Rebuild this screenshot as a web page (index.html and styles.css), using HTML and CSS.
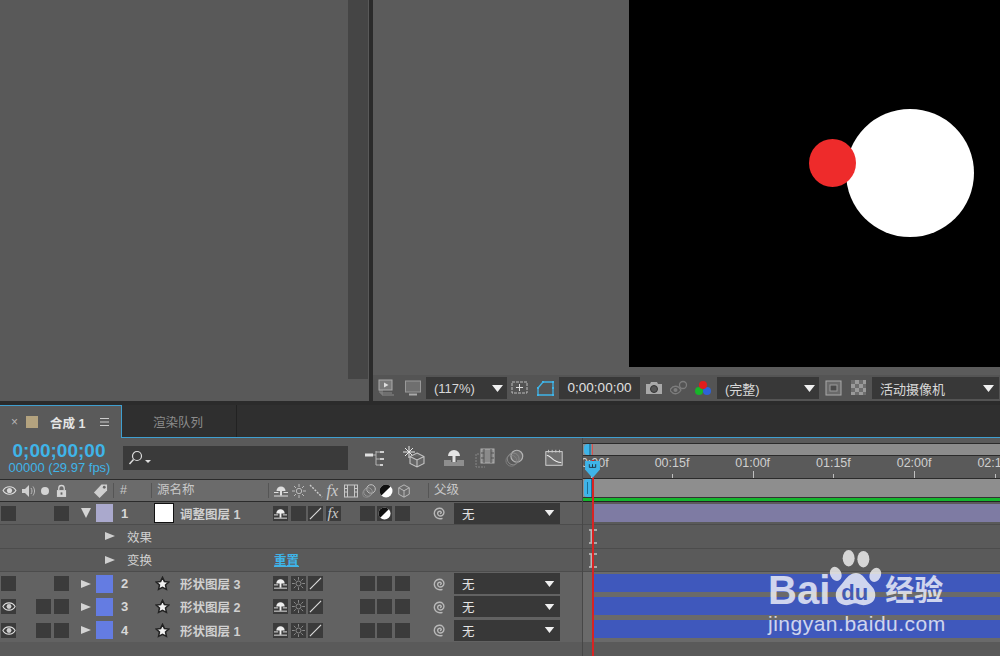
FILE: index.html
```html
<!DOCTYPE html>
<html lang="zh">
<head>
<meta charset="utf-8">
<title>After Effects</title>
<link rel="stylesheet" href="styles.css">
</head>
<body>
<svg class="defs" width="0" height="0" aria-hidden="true">
  <symbol id="shy" viewBox="0 0 14 14"><path d="M2.500 7a4.500 4.500 0 0 1 9 0z" fill="currentColor"/><path d="M6 6h2v5.500H6z" fill="currentColor"/><path d="M0 8.500h4.500M9.500 8.500H14M0 12h14" stroke="currentColor" stroke-width="1" fill="none"/></symbol>
  <symbol id="sun" viewBox="0 0 14 14"><circle cx="7" cy="7" r="2.700" fill="none" stroke="currentColor"/><path d="M7 0v3M7 11v3M0 7h3M11 7h3M2 2l2 2M10 10l2 2M12 2l-2 2M4 10l-2 2" stroke="currentColor"/></symbol>
  <symbol id="spiral" viewBox="0 0 14 14"><path d="M7 7.500c1.200.3 1.800-1.300.7-2-1.600-.8-3.300.5-3 2.300.3 2 2.900 2.800 4.700 1.600 2-1.400 2-4.400.2-6C8 1.600 4.500 1.800 2.500 4 .7 6.200 1 9.700 3.300 11.500 5 12.800 7.500 13 9.500 12.300" fill="none" stroke="currentColor" stroke-width="1.400"/></symbol>
  <symbol id="star" viewBox="0 0 16 16"><path d="M8 1.500l2 4.300 4.700.6-3.500 3.200 1 4.700L8 12l-4.200 2.300 1-4.700-3.500-3.200 4.700-.6z" fill="#f2f2f2" stroke="#222" stroke-width="1.600"/></symbol>
  <symbol id="half" viewBox="0 0 14 14"><circle cx="7" cy="7" r="6.500" fill="#fff"/><path d="M2.400 11.600A6.500 6.500 0 0 1 11.600 2.400z" fill="#111"/></symbol>
  <symbol id="cube" viewBox="0 0 16 16"><path d="M8 1l6 3.300v7.400L8 15l-6-3.300V4.300zM2 4.300l6 3.400 6-3.400M8 7.700V15" fill="none" stroke="currentColor" stroke-width="1.100"/></symbol>
  <symbol id="caret" viewBox="0 0 11 7"><path d="M0 0h11L5.500 7z" fill="currentColor"/></symbol>
  <symbol id="tri-r" viewBox="0 0 10 10"><path d="M0 1l10 4-10 4z" fill="currentColor"/></symbol>
  <symbol id="tri-d" viewBox="0 0 10 10"><path d="M0 0h10L5 10z" fill="currentColor"/></symbol>
  <symbol id="beam" viewBox="0 0 8 15"><path d="M0 1h8M0 14h8" stroke="#c4c4c4" stroke-width="1.500"/><path d="M1.500 1h3.500v13H1.500z" fill="#b8b8b8"/></symbol>
</svg>

<div class="app">
  <div class="top">
    <section class="left-panel">
      <div class="left-scroll"></div>
    </section>
    <section class="viewer">
      <div class="viewer-main">
        <div class="canvas">
          <div class="ball ball-white"></div>
          <div class="ball ball-red"></div>
        </div>
      </div>
      <div class="viewer-bar">
        <svg class="vb-icon gap8" viewBox="0 0 18 18"><path d="M4 5v11h12M2 3v11h12" fill="none" stroke="#8a8a8a"/><rect x="1" y="1" width="13" height="10" fill="#7a7a7a" stroke="#aaa"/><path d="M6 3.500l4.500 2.500L6 8.500z" fill="#ddd"/></svg>
        <svg class="vb-icon gap4" viewBox="0 0 18 18"><rect x="1.500" y="2" width="15" height="11" fill="#6f6f6f" stroke="#999"/><path d="M5 15.500h8" stroke="#aaa" stroke-width="2"/></svg>
        <div class="drop drop-zoom"><span>(117%)</span><svg class="caret"><use href="#caret"/></svg></div>
        <svg class="vb-icon gap8" viewBox="0 0 18 18"><path d="M1 3h15v11H1z" fill="none" stroke="#bbb" stroke-dasharray="3 1"/><path d="M8.500 5v7M5 8.500h7" stroke="#ddd"/></svg>
        <svg class="vb-icon gap4" viewBox="0 0 18 18"><path d="M6 3h10v13H1V9z" fill="none" stroke="#3fb4e8" stroke-width="1.300"/><path d="M5 2h2v2H5zM15 2h2v2h-2zM15 8h2v2h-2zM15 15h2v2h-2zM0 15h2v2H0zM0 8h2v2H0z" fill="#3fb4e8"/></svg>
        <div class="tc-box">0;00;00;00</div>
        <svg class="vb-icon gap7" viewBox="0 0 18 18"><path d="M1 5h4l1-2h6l1 2h4v10H1z" fill="#a8a8a8"/><circle cx="9" cy="10" r="3.500" fill="#555" stroke="#333"/></svg>
        <svg class="vb-icon gap6" viewBox="0 0 18 18"><path d="M0 11c3-5 8-5 11 0-3 5-8 5-11 0z" fill="none" stroke="#7d7d7d" stroke-width="1.300"/><circle cx="5.500" cy="11" r="2" fill="#7d7d7d"/><circle cx="13" cy="6" r="3.500" fill="none" stroke="#7d7d7d" stroke-width="1.300"/></svg>
        <svg class="vb-icon gap5" viewBox="0 0 18 18"><circle cx="5" cy="12" r="4" fill="#17b52a"/><circle cx="13" cy="12" r="4" fill="#2e62d8"/><circle cx="9" cy="6" r="4" fill="#e01d1d"/></svg>
        <div class="drop drop-res"><span>(完整)</span><svg class="caret"><use href="#caret"/></svg></div>
        <svg class="vb-icon gap7" viewBox="0 0 18 18"><rect x="1" y="2" width="15" height="14" fill="#6a6a6a" stroke="#aaa"/><rect x="5" y="6" width="7" height="6" fill="#4a4a4a" stroke="#999"/></svg>
        <svg class="vb-icon gap4" viewBox="0 0 18 18"><rect x="1" y="1" width="15" height="15" fill="#9a9a9a"/><path d="M1 1h4v4H1zM9 1h4v4H9zM5 5h4v4H5zM13 5h3v4h-3zM1 9h4v4H1zM9 9h4v4H9zM5 13h4v3H5zM13 13h3v3h-3z" fill="#6e6e6e"/></svg>
        <div class="drop drop-cam"><span>活动摄像机</span><svg class="caret"><use href="#caret"/></svg></div>
      </div>
    </section>
  </div>

  <div class="tabs">
    <div class="tab tab-active">
      <span class="tab-x">×</span>
      <span class="tab-chip"></span>
      <span class="tab-name">合成 1</span>
      <svg class="tab-menu" viewBox="0 0 9 8"><path d="M0 .5h9M0 4h9M0 7.500h9" stroke="#ccc"/></svg>
    </div>
    <div class="tab tab-idle">渲染队列</div>
    <div class="tab-rest"></div>
  </div>

  <div class="timeline">
    <div class="tl-left">
      <div class="controls">
        <div class="timecode">
          <div class="tc-main">0;00;00;00</div>
          <div class="tc-sub">00000 (29.97 fps)</div>
        </div>
        <div class="search">
          <svg class="search-icon" viewBox="0 0 24 16"><circle cx="9" cy="6" r="4.500" fill="none" stroke="#ddd" stroke-width="1.200"/><path d="M5.500 9.500L1.500 14" stroke="#ddd" stroke-width="1.500"/><path d="M17 10h6l-3 3z" fill="#ddd"/></svg>
        </div>
        <div class="tools">
          <svg class="tool t1" viewBox="0 0 22 20"><path d="M1 5h8" stroke="#e0e0e0" stroke-width="3"/><path d="M9 5h3M12 1v14M12 2h6M12 9h6M12 15h6" fill="none" stroke="#b4b4b4"/><path d="M16 1h4v2h-4zM16 8h4v2h-4zM16 14h3v2h-3z" fill="#cfcfcf"/></svg>
          <svg class="tool t2" viewBox="0 0 22 22"><path d="M6 0v12M0 6h12M2 2l8 8M10 2l-8 8" stroke="#e6e6e6"/><path d="M14 7l7 3.500v7L14 21l-7-3.500v-7zM7 10.500l7 3.500 7-3.500M14 14v7" fill="#666" stroke="#c4c4c4" stroke-width="1.100"/></svg>
          <svg class="tool t3" viewBox="0 0 22 20"><path d="M5 8a6 6 0 0 1 12 0z" fill="#e4e4e4"/><path d="M9.500 7h3v7h-3z" fill="#e4e4e4"/><path d="M1 12h7v2h6v-2h7v6H1z" fill="#8e8e8e"/></svg>
          <svg class="tool t4" viewBox="0 0 22 20"><rect x="7" y="1" width="13" height="14" fill="#8a8a8a" stroke="#b0b0b0"/><path d="M10 1v14M17 1v14M7 5h3M7 10h3M17 5h3M17 10h3" stroke="#555"/><path d="M2 6v13h9M5 6H2" fill="none" stroke="#858585" stroke-dasharray="2 1"/></svg>
          <svg class="tool t5" viewBox="0 0 22 20"><circle cx="13" cy="8" r="6.500" fill="#6e6e6e" stroke="#b4b4b4" stroke-width="1.300"/><circle cx="9" cy="11" r="6.500" fill="none" stroke="#8c8c8c"/><circle cx="7" cy="13" r="6" fill="none" stroke="#808080"/></svg>
          <svg class="tool t6" viewBox="0 0 22 20"><rect x="2" y="3" width="18" height="15" fill="#707070" stroke="#d8d8d8"/><path d="M3 7c5 0 6 8 16 8" fill="none" stroke="#eee" stroke-width="1.200"/><path d="M5 1v3M9 1v3M13 1v3M17 1v3" stroke="#ccc"/></svg>
        </div>
      </div>

      <div class="head">
        <div class="h-av">
          <svg class="h-eye" viewBox="0 0 16 12"><path d="M1 6c3-5.500 11-5.500 14 0-3 5.500-11 5.500-14 0z" fill="none" stroke="#e0e0e0" stroke-width="1.200"/><circle cx="8" cy="6" r="2.800" fill="#d8d8d8"/></svg>
          <svg class="h-spk" viewBox="0 0 14 14"><path d="M1 5h3l4-4v12L4 9H1z" fill="#d0d0d0"/><path d="M10 4c1.300 2 1.300 4 0 6M12 2.500c2 3 2 6 0 9" fill="none" stroke="#bbb"/></svg>
          <span class="h-dot"></span>
          <svg class="h-lock" viewBox="0 0 12 14"><path d="M3 6V4a3 3 0 0 1 6 0v2" fill="none" stroke="#d4d4d4" stroke-width="1.400"/><rect x="1" y="6" width="10" height="7.500" fill="#d4d4d4"/><rect x="5" y="8.500" width="2" height="2.500" fill="#666"/></svg>
        </div>
        <div class="h-label">
          <svg viewBox="0 0 16 16"><path d="M1 10L9 1.500h6V8l-8 8z" fill="#cfcfcf"/><circle cx="12" cy="4.500" r="1.500" fill="#666"/></svg>
        </div>
        <div class="h-num">#</div>
        <div class="h-name">源名称</div>
        <div class="h-sw">
          <svg class="hi"><use href="#shy"/></svg>
          <svg class="hi hi-sun"><use href="#sun"/></svg>
          <svg class="hi" viewBox="0 0 14 14"><path d="M1 1l12 12" stroke="#ccc" stroke-width="1.400" stroke-dasharray="2 1.300"/></svg>
          <span class="fx">fx</span>
          <svg class="hi" viewBox="0 0 14 14"><rect x=".5" y="1" width="13" height="12" fill="none" stroke="#c8c8c8"/><path d="M3.500 1v12M10.500 1v12M.5 4.500h3M.5 8h3M10.500 4.500h3M10.500 8h3" stroke="#c8c8c8"/></svg>
          <svg class="hi" viewBox="0 0 14 14"><circle cx="9" cy="5" r="4.300" fill="none" stroke="#c0c0c0"/><circle cx="6" cy="8" r="4.300" fill="none" stroke="#999"/><circle cx="4.500" cy="9.500" r="4" fill="none" stroke="#888"/></svg>
          <svg class="hi"><use href="#half"/></svg>
          <svg class="hi hi-cube"><use href="#cube"/></svg>
        </div>
        <div class="h-parent">父级</div>
      </div>

      <div class="row row-first">
        <div class="sw-av"><i class="box"></i><i class="gap"></i><i class="gap"></i><i class="box"></i></div>
        <svg class="tri"><use href="#tri-d"/></svg>
        <span class="chip chip-lilac"></span>
        <span class="num">1</span>
        <span class="solid"></span>
        <span class="name">调整图层 1</span>
        <div class="sw">
          <i class="box"><svg class="ib"><use href="#shy"/></svg></i><i class="box"></i>
          <i class="box"><svg class="ib" viewBox="0 0 14 14"><path d="M1 13L13 1" stroke="#ddd" stroke-width="1.200"/></svg></i>
          <i class="box fx-box">fx</i>
        </div>
        <div class="sw sw2"><i class="box"></i><i class="box"><svg class="ib"><use href="#half"/></svg></i><i class="box"></i></div>
        <svg class="spiral"><use href="#spiral"/></svg>
        <div class="parent"><span>无</span><svg class="caret"><use href="#caret"/></svg></div>
      </div>

      <div class="row row-sub">
        <svg class="sub-tri"><use href="#tri-r"/></svg><span class="sub-name">效果</span>
      </div>
      <div class="row row-sub">
        <svg class="sub-tri"><use href="#tri-r"/></svg><span class="sub-name">变换</span><span class="reset">重置</span>
      </div>

      <div class="row">
        <div class="sw-av"><i class="box"></i><i class="gap"></i><i class="gap"></i><i class="box"></i></div>
        <svg class="tri"><use href="#tri-r"/></svg>
        <span class="chip chip-blue"></span>
        <span class="num">2</span>
        <svg class="star"><use href="#star"/></svg>
        <span class="name">形状图层 3</span>
        <div class="sw"><i class="box"><svg class="ib"><use href="#shy"/></svg></i><i class="box"><svg class="ib dim"><use href="#sun"/></svg></i><i class="box"><svg class="ib" viewBox="0 0 14 14"><path d="M1 13L13 1" stroke="#ddd" stroke-width="1.200"/></svg></i></div>
        <div class="sw sw2"><i class="box"></i><i class="box"></i><i class="box"></i></div>
        <svg class="spiral"><use href="#spiral"/></svg>
        <div class="parent"><span>无</span><svg class="caret"><use href="#caret"/></svg></div>
      </div>
      <div class="row">
        <div class="sw-av"><i class="box"><svg class="ib eye" viewBox="0 0 16 12"><path d="M1 6c3-5.500 11-5.500 14 0-3 5.500-11 5.500-14 0z" fill="none" stroke="#ddd" stroke-width="1.200"/><circle cx="8" cy="6" r="2.800" fill="#ccc"/></svg></i><i class="gap"></i><i class="box"></i><i class="box"></i></div>
        <svg class="tri"><use href="#tri-r"/></svg>
        <span class="chip chip-blue"></span>
        <span class="num">3</span>
        <svg class="star"><use href="#star"/></svg>
        <span class="name">形状图层 2</span>
        <div class="sw"><i class="box"><svg class="ib"><use href="#shy"/></svg></i><i class="box"><svg class="ib dim"><use href="#sun"/></svg></i><i class="box"><svg class="ib" viewBox="0 0 14 14"><path d="M1 13L13 1" stroke="#ddd" stroke-width="1.200"/></svg></i></div>
        <div class="sw sw2"><i class="box"></i><i class="box"></i><i class="box"></i></div>
        <svg class="spiral"><use href="#spiral"/></svg>
        <div class="parent"><span>无</span><svg class="caret"><use href="#caret"/></svg></div>
      </div>
      <div class="row">
        <div class="sw-av"><i class="box"><svg class="ib eye" viewBox="0 0 16 12"><path d="M1 6c3-5.500 11-5.500 14 0-3 5.500-11 5.500-14 0z" fill="none" stroke="#ddd" stroke-width="1.200"/><circle cx="8" cy="6" r="2.800" fill="#ccc"/></svg></i><i class="gap"></i><i class="box"></i><i class="box"></i></div>
        <svg class="tri"><use href="#tri-r"/></svg>
        <span class="chip chip-blue"></span>
        <span class="num">4</span>
        <svg class="star"><use href="#star"/></svg>
        <span class="name">形状图层 1</span>
        <div class="sw"><i class="box"><svg class="ib"><use href="#shy"/></svg></i><i class="box"><svg class="ib dim"><use href="#sun"/></svg></i><i class="box"><svg class="ib" viewBox="0 0 14 14"><path d="M1 13L13 1" stroke="#ddd" stroke-width="1.200"/></svg></i></div>
        <div class="sw sw2"><i class="box"></i><i class="box"></i><i class="box"></i></div>
        <svg class="spiral"><use href="#spiral"/></svg>
        <div class="parent"><span>无</span><svg class="caret"><use href="#caret"/></svg></div>
      </div>
    </div>

    <div class="tl-right">
      <div class="nav-strip"><span class="nav-handle"></span><span class="nav-tick"></span></div>
      <div class="ruler">
        <span class="mark">00:00f</span><span class="mark">00:15f</span><span class="mark">01:00f</span><span class="mark">01:15f</span><span class="mark">02:00f</span><span class="mark">02:15f</span>
      </div>
      <div class="work"><span class="work-handle"></span></div>
      <div class="green"></div>
      <div class="track"><div class="bar bar-purple"></div></div>
      <div class="track"><svg class="ibeam"><use href="#beam"/></svg></div>
      <div class="track"><svg class="ibeam"><use href="#beam"/></svg></div>
      <div class="track track-layer"><div class="bar bar-blue"></div></div>
      <div class="track track-layer"><div class="bar bar-blue"></div></div>
      <div class="track track-layer"><div class="bar bar-blue"></div></div>
      <div class="playline"></div>
      <svg class="playhead" viewBox="0 0 14 16"><path d="M0 0h14v8l-7 8-7-8z" fill="#3fb4e8"/><path d="M4 3v3M7 3v3M10 3v3M4 6h6" stroke="#234" stroke-width=".9"/></svg>
    </div>
  </div>

  <div class="watermark">
    <div class="wm-top">
      <span class="wm-bai">Bai</span>
      <span class="wm-paw">
        <svg viewBox="0 0 56 62"><ellipse cx="6" cy="26" rx="6" ry="8" transform="rotate(-25 6 26)"/><ellipse cx="20" cy="9" rx="6.500" ry="9"/><ellipse cx="36" cy="10" rx="6.500" ry="9"/><ellipse cx="49" cy="27" rx="6" ry="8" transform="rotate(25 49 27)"/><path d="M28 25c6 0 9 5 13 10 5 5 8 8 8 14 0 8-7 11-13 11-4 0-6-2-9-2s-5 2-9 2c-6 0-12-3-12-11 0-6 4-9 8-14 4-5 8-10 14-10z"/></svg>
        <span class="wm-du">du</span>
      </span>
      <span class="wm-cn">经验</span>
    </div>
    <div class="wm-url">jingyan.baidu.com</div>
  </div>
</div>
</body>
</html>
```
FILE: styles.css
```css
* { box-sizing: border-box; }
html, body { margin: 0; padding: 0; background: #2b2b2b; }
body { font-family: "Liberation Sans", "Noto Sans CJK SC", sans-serif; }
.defs { position: absolute; }
.app { position: relative; width: 1000px; height: 656px; overflow: hidden; background: #2b2b2b; display: flex; flex-direction: column; }

/* top */
.top { height: 401px; display: flex; gap: 4px; flex: none; }
.left-panel { width: 369px; background: #595959; display: flex; justify-content: flex-end; align-items: flex-start; padding-right: 1px; }
.left-scroll { width: 20px; height: 379px; background: #454545; }
.viewer { flex: 1; background: #5b5b5b; display: flex; flex-direction: column; min-width: 0; }
.viewer-main { height: 375px; flex: none; }
.canvas { position: relative; margin-left: 256px; height: 367px; background: #000; overflow: hidden; }
.ball { position: absolute; border-radius: 50%; }
.ball-white { left: 217px; top: 109px; width: 128px; height: 128px; background: #fff; }
.ball-red { left: 180px; top: 139px; width: 47px; height: 48px; background: #ee2b2b; }

.viewer-bar { height: 26px; background: #545454; display: flex; align-items: center; padding-left: 5px; color: #ddd; font-size: 13px; }
.vb-icon { width: 18px; height: 18px; flex: none; }
.gap4 { margin-right: 4px; }
.gap5 { margin-right: 5px; }
.gap6 { margin-right: 6px; }
.gap7 { margin-right: 7px; }
.gap8 { margin-right: 8px; }
.drop { height: 22px; background: #383838; display: flex; align-items: center; justify-content: space-between; padding: 0 4px 0 8px; flex: none; color: #d8d8d8; }
.caret { width: 11px; height: 7px; color: #f0f0f0; flex: none; }
.drop-zoom { width: 81px; margin-right: 4px; }
.tc-box { width: 81px; height: 22px; background: #383838; color: #e0e0e0; line-height: 22px; text-align: center; margin-right: 5px; flex: none; font-size: 13.500px; }
.drop-res { width: 102px; margin-right: 6px; }
.drop-cam { width: 127px; padding-right: 5px; }

/* tabs */
.tabs { height: 33px; margin-top: 4px; flex: none; display: flex; background: #2f2f2f; border-bottom: 1px solid #3f9fd0; }
.tab { height: 33px; display: flex; align-items: center; flex: none; }
.tab-active { width: 122px; background: #5a5a5a; border-top: 1px solid #3f9fd0; border-right: 1px solid #3f9fd0; }
.tab-x { width: 26px; text-align: center; color: #b5b5b5; font-size: 12px; padding-left: 3px; }
.tab-chip { width: 12px; height: 12px; background: #b4a37f; margin-right: 12px; flex: none; }
.tab-name { width: 50px; color: #e4e4e4; font-size: 12.500px; font-weight: bold; }
.tab-menu { width: 9px; height: 8px; flex: none; }
.tab-idle { width: 115px; height: 32px; justify-content: flex-start; padding-left: 31px; color: #8c8c8c; font-size: 12.500px; border-right: 1px solid #222; }
.tab-rest { flex: 1; }

/* timeline */
.timeline { flex: 1; display: flex; min-height: 0; background: #5a5a5a; }
.tl-left { width: 582px; flex: none; display: flex; flex-direction: column; }
.controls { height: 41px; flex: none; display: flex; align-items: flex-start; border-bottom: 1px solid #2b2b2b; box-sizing: content-box; }
.timecode { width: 123px; text-align: center; color: #3fb4e8; }
.tc-main { font-size: 19px; font-weight: bold; line-height: 20px; padding: 3px 5px 0 0; height: 23px; }
.tc-sub { font-size: 13px; line-height: 14px; padding-right: 4px; margin-top: 0; white-space: nowrap; }
.search { width: 225px; height: 24px; margin-top: 8px; background: #3a3a3a; padding: 4px 0 0 5px; flex: none; }
.search-icon { display: block; width: 24px; height: 16px; }
.tools { position: relative; flex: 1; }
.tool { position: absolute; }
.t1 { left: 16px; top: 12px; width: 22px; height: 20px; }
.t2 { left: 55px; top: 8px; width: 22px; height: 22px; }
.t3 { left: 95px; top: 10px; width: 22px; height: 20px; }
.t4 { left: 126px; top: 10px; width: 22px; height: 20px; }
.t5 { left: 157px; top: 10px; width: 20px; height: 20px; }
.t6 { left: 196px; top: 10px; width: 20px; height: 20px; }

.head { height: 21px; flex: none; background: #6b6b6b; border-bottom: 1px solid #2b2b2b; box-sizing: content-box; display: grid; grid-template-columns: 76px 37px 38px 117px 160px 1fr; align-items: center; color: #c8c8c8; font-size: 12.500px; }
.h-av { display: flex; align-items: center; padding-left: 2px; gap: 4px; }
.h-eye { width: 15px; height: 11px; }
.h-spk { width: 14px; height: 14px; }
.h-dot { width: 8px; height: 8px; border-radius: 50%; background: #d4d4d4; margin: 0 3px 0 2px; }
.h-lock { width: 11px; height: 14px; }
.h-label { height: 21px; padding: 3px 0 0 17px; }
.h-label svg { display: block; width: 15px; height: 15px; }
.h-num { padding-left: 6px; border-left: 1px solid #555; height: 15px; line-height: 15px; }
.h-name { padding-left: 5px; border-left: 1px solid #555; height: 15px; line-height: 15px; }
.h-sw { display: flex; align-items: center; gap: 3.500px; padding-left: 5px; border-left: 1px solid #555; height: 15px; color: #ddd; }
.hi { width: 14px; height: 14px; flex: none; }
.hi-sun { color: #bbb; }
.hi-cube { color: #bbb; }
.fx { font-family: "Liberation Serif", serif; font-style: italic; font-size: 16px; color: #ccc; line-height: 15px; width: 14px; }
.h-parent { padding-left: 5px; border-left: 1px solid #555; height: 15px; line-height: 15px; }

.row { height: 23.300px; flex: none; display: grid; grid-template-columns: 81px 15px 18px 40px 26px 93px 87px 69px 25px 106px; align-items: center; background: #626262; color: #d8d8d8; font-size: 12.500px; }
.row-first { background: #5e5e5e; border-bottom: 1px solid #4c4c4c; }
.row-sub { display: flex; background: #5a5a5a; border-bottom: 1px solid #4c4c4c; padding-left: 105px; }
.sw-av { display: flex; gap: 2.500px; padding-left: 1px; }
.box { display: flex; align-items: center; justify-content: center; width: 15px; height: 15px; background: #3b3b3b; flex: none; font-style: normal; }
.gap { width: 15px; height: 15px; flex: none; }
.ib { width: 13px; height: 13px; color: #eee; display: block; }
.ib.dim { color: #909090; }
.ib.eye { width: 14px; height: 11px; }
.tri { width: 10px; height: 10px; color: #d4d4d4; }
.chip { display: block; width: 17px; height: 18px; }
.chip-lilac { background: #aaa9cd; }
.chip-blue { background: #647ce2; }
.num { font-weight: bold; font-size: 13px; padding-left: 7px; color: #d8d8d8; }
.solid { display: block; width: 20px; height: 20px; background: #fff; border: 1px solid #111; }
.star { width: 15px; height: 15px; margin-left: 1px; }
.name { font-weight: bold; font-size: 12.500px; color: #d0d0d0; white-space: nowrap; }
.sw { display: flex; gap: 2.500px; }
.sw2 { gap: 2.300px; }
.fx-box { font-family: "Liberation Serif", serif; font-style: italic; font-size: 15px; color: #ccc; }
.spiral { width: 14px; height: 14px; color: #b8b8b8; margin-left: 4px; }
.parent { height: 21px; background: #383838; display: flex; align-items: center; justify-content: space-between; padding: 0 5px 0 8px; color: #e4e4e4; }
.parent .caret { width: 11px; height: 6px; }
.sub-tri { width: 10px; height: 10px; color: #cfcfcf; margin-right: 12px; flex: none; }
.sub-name { color: #d0d0d0; width: 147px; }
.reset { color: #3fb4e8; text-decoration: underline; font-weight: bold; }

/* right of timeline */
.tl-right { flex: 1; position: relative; overflow: hidden; border-left: 1px solid #474747; padding-top: 5px; display: flex; flex-direction: column; }
.nav-strip { height: 13px; flex: none; background: #8c8c8c; border: 1px solid #2b2b2b; border-width: 1px 0; position: relative; }
.nav-handle { position: absolute; left: 1px; top: 0; width: 7px; height: 11px; background: #3fb4e8; border-radius: 4px 0 0 4px; border-right: 2px solid #2a86b0; }
.nav-tick { position: absolute; left: 9px; top: 0; width: 1px; height: 11px; background: #d85050; }
.ruler { height: 22px; flex: none; display: flex; margin-left: -32px; color: #cfcfcf; font-size: 12.500px; border-bottom: 1px solid #2b2b2b; box-sizing: content-box; width: 520px; }
.mark { width: 80.700px; flex: none; text-align: center; position: relative; line-height: 15px; }
.mark::after { content: ""; position: absolute; left: 50%; bottom: 0; width: 1px; height: 4px; background: #c0c0c0; }
.mark:nth-child(odd)::after { height: 7px; }
.work { height: 18px; flex: none; background: #8e8e8e; position: relative; }
.work-handle { position: absolute; left: 1px; top: 0; width: 8px; height: 18px; background: #3fb4e8; border-radius: 3px 0 0 3px; border-right: 1px solid #1b6f96; }
.work-handle::after { content: ""; position: absolute; left: 3px; top: 3px; bottom: 3px; width: 1px; background: #1b6f96; }
.green { height: 5px; flex: none; background: #14b52c; border-top: 1px solid #333; border-bottom: 1px solid #222; }
.track { height: 23.300px; flex: none; padding-top: 2px; border-bottom: 1px solid #4c4c4c; position: relative; }
.track-layer { background: #6a6a6a; border-bottom: 0; }
.bar { height: 18px; margin-left: 10px; }
.bar-purple { background: #7e7ba3; }
.bar-blue { background: #3f58bc; }
.ibeam { position: absolute; left: 6px; top: 4px; width: 8px; height: 15px; }
.playline { position: absolute; left: 9px; top: 22px; bottom: 0; width: 1.500px; background: #d82323; }
.playhead { position: absolute; left: 2px; top: 23px; width: 15px; height: 17px; }

/* watermark */
.watermark { position: absolute; left: 768px; top: 550px; width: 180px; color: #fff; opacity: .75; }
.wm-top { display: flex; align-items: flex-end; height: 57px; }
.wm-bai { font-size: 40px; font-weight: bold; line-height: 34px; margin-bottom: 0; }
.wm-paw { position: relative; width: 54px; height: 57px; flex: none; margin-left: -1px; }
.wm-paw svg { display: block; width: 54px; height: 57px; fill: #fff; }
.wm-du { position: absolute; left: 12px; bottom: 3px; color: #3f58bc; font-size: 22px; font-weight: bold; line-height: 22px; }
.wm-cn { font-size: 29px; font-weight: bold; line-height: 32px; margin: 0 0 0 2px; white-space: nowrap; }
.wm-url { font-size: 21px; line-height: 22px; margin-top: 6px; white-space: nowrap; letter-spacing: .5px; }
```
